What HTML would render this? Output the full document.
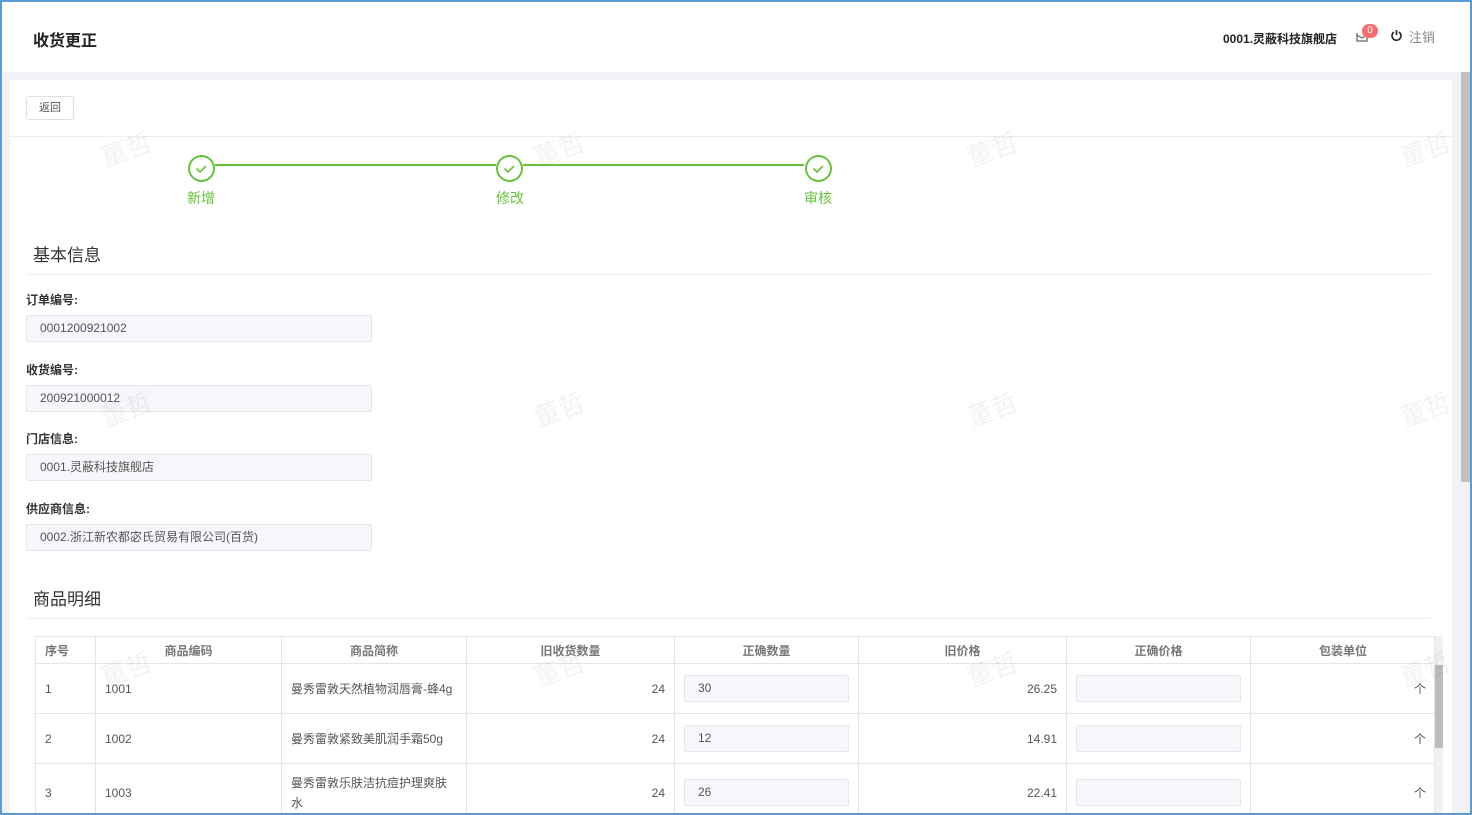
<!DOCTYPE html>
<html><head><meta charset="utf-8">
<style>
*{margin:0;padding:0;box-sizing:border-box}
html,body{width:1472px;height:815px;overflow:hidden}
body{background:#f0f2f5;font-family:"Liberation Sans","Noto Sans CJK SC",sans-serif;position:relative;color:#333}
.a{position:absolute}
.frame{position:absolute;left:0;top:0;width:1472px;height:815px;border:2px solid #5b9bd5;pointer-events:none;z-index:10}
.hdr{left:0;top:0;width:1472px;height:72px;background:#fff}
.card{left:10px;top:80px;width:1442px;height:735px;background:#fff}
.lbl{font-size:12px;font-weight:bold;color:#333}
.inp{width:346px;height:27px;background:#f5f7fa;border:1px solid #e4e7ed;font-size:12px;color:#555;padding-left:13px;line-height:25px;border-radius:2px}
.step{width:27px;height:27px;border:2px solid #67c23a;border-radius:50%}
.stxt{font-size:14px;color:#67c23a}
.sec{font-size:17px;color:#333}
table{border-collapse:collapse;font-size:12px;color:#555}
td,th{border:1px solid #e5e5e5;padding:0 9px}
th{height:27px;font-weight:bold;color:#777;text-align:center}
td{height:50px}
.r{text-align:right}
.ti{height:27px;background:#f5f7fa;border:1px solid #e4e7ed;border-radius:2px;padding-left:13px;line-height:25px;text-align:left}
.wm{position:absolute;font-size:26px;color:rgba(0,0,0,.05);transform:rotate(-20deg)}
</style></head><body>
<div class="a hdr"></div>
<div class="a" style="left:33px;top:27px;font-size:16px;font-weight:bold;color:#222">收货更正</div>
<div class="a" style="left:1223px;top:30px;font-size:12px;font-weight:bold;color:#222">0001.灵蔽科技旗舰店</div>
<svg class="a" style="left:1355px;top:29px" width="14" height="14" viewBox="0 0 14 14"><path d="M2 4v8h10V6" fill="none" stroke="#666" stroke-width="1.3"/><path d="M2 6l5 3 5-3" fill="none" stroke="#666" stroke-width="1.2"/></svg>
<div class="a" style="left:1362px;top:24px;width:16px;height:14px;border-radius:7px;background:#f56c6c;color:#fff;font-size:10px;text-align:center;line-height:14px">0</div>
<svg class="a" style="left:1390px;top:29px" width="13" height="13" viewBox="0 0 13 13"><path d="M4 3a4.5 4.5 0 1 0 5 0" fill="none" stroke="#222" stroke-width="1.6"/><path d="M6.5 1v5" stroke="#222" stroke-width="1.6"/></svg>
<div class="a" style="left:1409px;top:27px;font-size:13px;color:#888">注销</div>
<div class="a card"></div>
<div class="a" style="left:1461px;top:72px;width:9px;height:410px;background:#c1c1c1"></div>
<div class="a" style="left:26px;top:96px;width:48px;height:24px;border:1px solid #dcdfe6;border-radius:3px;font-size:11px;text-align:center;line-height:22px;color:#555;background:#fff">返回</div>
<div class="a" style="left:10px;top:136px;width:1442px;height:1px;background:#ebeef5"></div>
<div class="a" style="left:215px;top:164px;width:281px;height:2px;background:#67c23a"></div>
<div class="a" style="left:523px;top:164px;width:281px;height:2px;background:#67c23a"></div>
<div class="a step" style="left:188px;top:155px"></div>
<div class="a step" style="left:496px;top:155px"></div>
<div class="a step" style="left:805px;top:155px"></div>
<svg class="a" style="left:188px;top:155px" width="27" height="27"><path d="M8.5 13.5l3.5 3.5 6-6" fill="none" stroke="#67c23a" stroke-width="1.6"/></svg>
<svg class="a" style="left:496px;top:155px" width="27" height="27"><path d="M8.5 13.5l3.5 3.5 6-6" fill="none" stroke="#67c23a" stroke-width="1.6"/></svg>
<svg class="a" style="left:805px;top:155px" width="27" height="27"><path d="M8.5 13.5l3.5 3.5 6-6" fill="none" stroke="#67c23a" stroke-width="1.6"/></svg>
<div class="a stxt" style="left:187px;top:188px">新增</div>
<div class="a stxt" style="left:496px;top:188px">修改</div>
<div class="a stxt" style="left:804px;top:188px">审核</div>
<div class="a sec" style="left:33px;top:241px">基本信息</div>
<div class="a" style="left:27px;top:274px;width:1403px;height:1px;background:#ebeef5"></div>
<div class="a lbl" style="left:26px;top:291px">订单编号:</div>
<div class="a inp" style="left:26px;top:315px">0001200921002</div>
<div class="a lbl" style="left:26px;top:361px">收货编号:</div>
<div class="a inp" style="left:26px;top:385px">200921000012</div>
<div class="a lbl" style="left:26px;top:430px">门店信息:</div>
<div class="a inp" style="left:26px;top:454px">0001.灵蔽科技旗舰店</div>
<div class="a lbl" style="left:26px;top:500px">供应商信息:</div>
<div class="a inp" style="left:26px;top:524px">0002.浙江新农都宓氏贸易有限公司(百货)</div>
<div class="a sec" style="left:33px;top:585px">商品明细</div>
<div class="a" style="left:27px;top:618px;width:1403px;height:1px;background:#ebeef5"></div>
<table class="a" style="left:35px;top:636px;width:1400px;table-layout:fixed">
<colgroup><col style="width:60px"><col style="width:186px"><col style="width:185px"><col style="width:208px"><col style="width:184px"><col style="width:208px"><col style="width:184px"><col style="width:185px"></colgroup>
<tr><th style="text-align:left">序号</th><th>商品编码</th><th>商品简称</th><th>旧收货数量</th><th>正确数量</th><th>旧价格</th><th>正确价格</th><th>包装单位</th></tr>
<tr><td>1</td><td>1001</td><td>曼秀雷敦天然植物润唇膏-蜂4g</td><td class="r">24</td><td><div class="ti">30</div></td><td class="r">26.25</td><td><div class="ti"></div></td><td class="r">个</td></tr>
<tr><td>2</td><td>1002</td><td>曼秀雷敦紧致美肌润手霜50g</td><td class="r">24</td><td><div class="ti">12</div></td><td class="r">14.91</td><td><div class="ti"></div></td><td class="r">个</td></tr>
<tr><td style="height:58px">3</td><td>1003</td><td style="line-height:20px">曼秀雷敦乐肤洁抗痘护理爽肤水</td><td class="r">24</td><td><div class="ti">26</div></td><td class="r">22.41</td><td><div class="ti"></div></td><td class="r">个</td></tr>
</table>
<div class="a" style="left:1434px;top:636px;width:9px;height:180px;background:#f1f1f1;border-left:1px solid #e5e5e5"></div>
<div class="a" style="left:1435px;top:665px;width:8px;height:83px;background:#bcbcbc"></div>
<div class="wm" style="left:100px;top:130px">董哲</div><div class="wm" style="left:533px;top:130px">董哲</div><div class="wm" style="left:966px;top:130px">董哲</div><div class="wm" style="left:1399px;top:130px">董哲</div>
<div class="wm" style="left:100px;top:390px">董哲</div><div class="wm" style="left:533px;top:390px">董哲</div><div class="wm" style="left:966px;top:390px">董哲</div><div class="wm" style="left:1399px;top:390px">董哲</div>
<div class="wm" style="left:100px;top:650px">董哲</div><div class="wm" style="left:533px;top:650px">董哲</div><div class="wm" style="left:966px;top:650px">董哲</div><div class="wm" style="left:1399px;top:650px">董哲</div>
<div class="frame"></div>
</body></html>
